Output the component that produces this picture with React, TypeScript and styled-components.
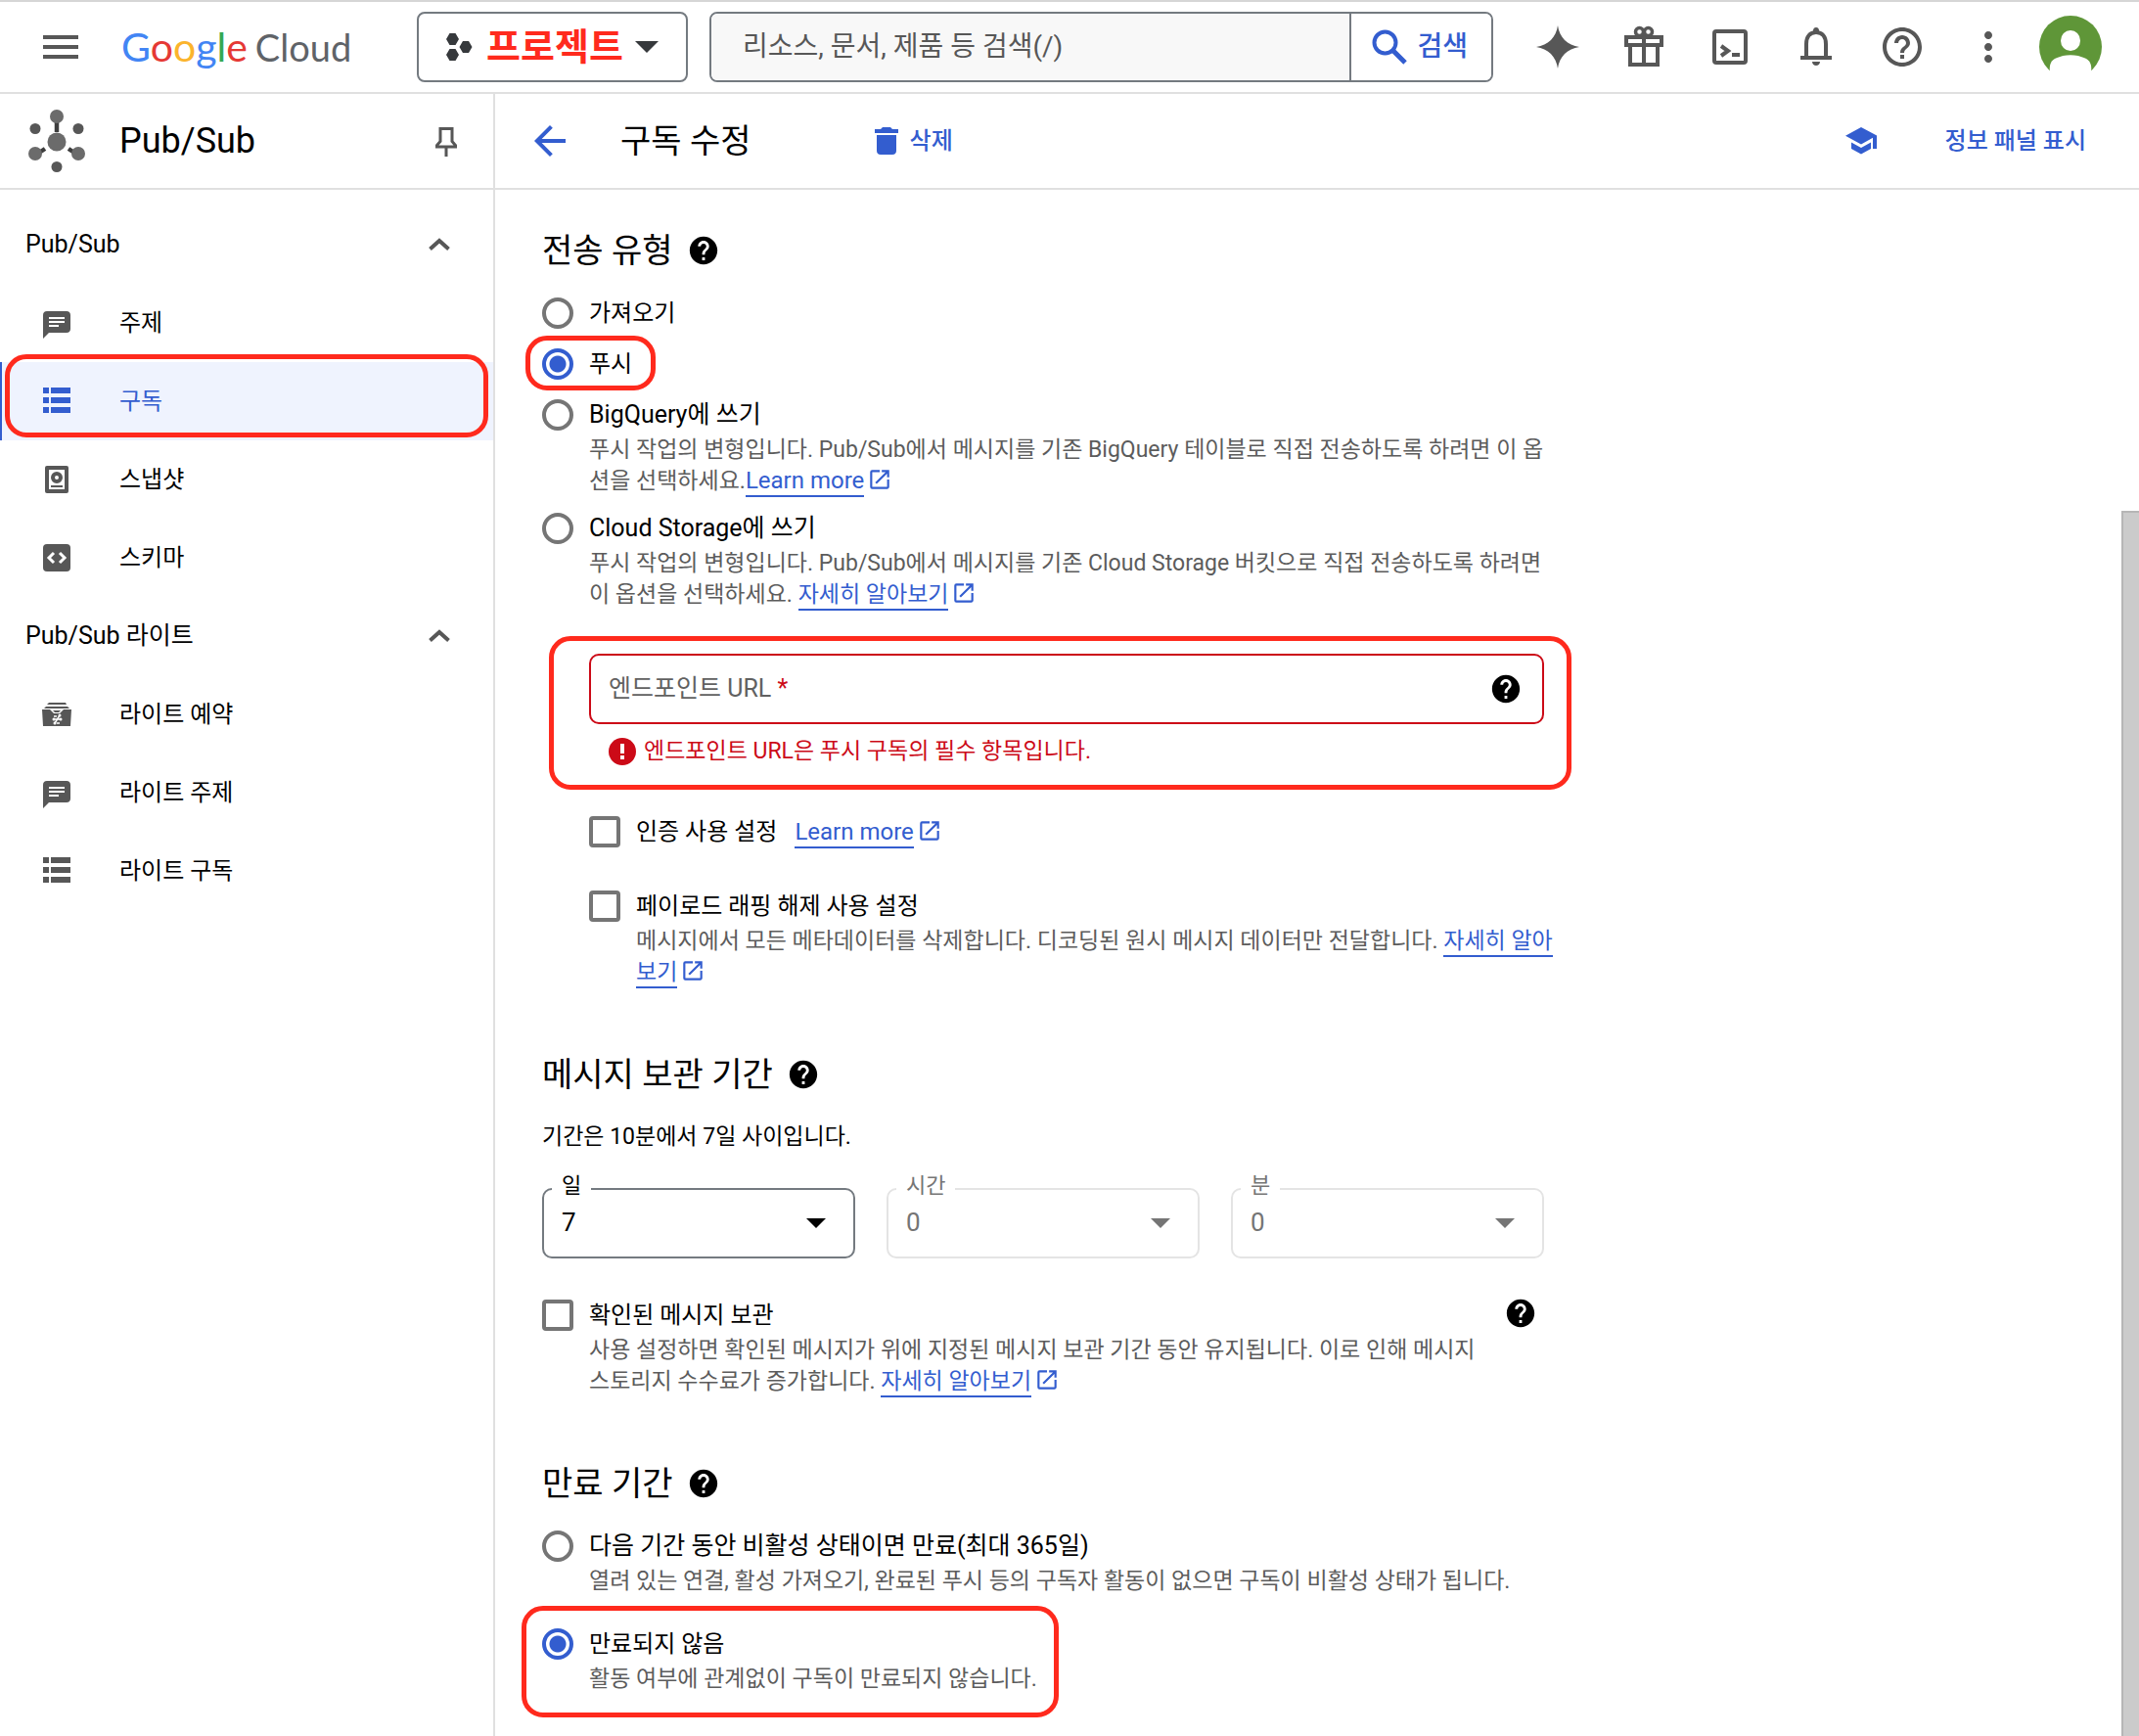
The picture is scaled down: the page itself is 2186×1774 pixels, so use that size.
import React, { useState } from "react";
import styled, { createGlobalStyle, css } from "styled-components";
import {
  MdArrowBack,
  MdHelp,
  MdHelpOutline,
  MdLaunch,
  MdMenu,
  MdMoreVert,
} from "react-icons/md";

const blue = "#335dcf";
const grey = "#575757";
const line = "#e0e0e0";
const danger = "#cc0a17";
const marker = "#ff2a1d";

const GlobalStyle = createGlobalStyle`
  *, *::before, *::after { box-sizing: border-box; }
  body {
    margin: 0;
    background: #fff;
    color: #000;
    font-family: Roboto, "Noto Sans CJK KR", sans-serif;
    font-size: 24px;
    line-height: 32px;
  }
  button, input, select { font: inherit; color: inherit; }
  h1, h2, p, ul { margin: 0; padding: 0; font-weight: 400; }
  ul { list-style: none; }
  svg { display: block; flex: none; }
`;

const Page = styled.div`
  min-height: 100vh;
  display: flex;
  flex-direction: column;
`;

/* ---------- top bar ---------- */

const TopBar = styled.header`
  display: flex;
  align-items: center;
  height: 96px;
  padding: 0 38px;
  border-top: 2px solid #d6d6d6;
  border-bottom: 2px solid ${line};
`;

const IconButton = styled.button<{ $color?: string }>`
  display: flex;
  align-items: center;
  justify-content: center;
  flex: none;
  width: 48px;
  height: 48px;
  padding: 0;
  border: 0;
  background: none;
  color: ${(p) => p.$color ?? grey};
  cursor: pointer;
`;

const Logo = styled.a`
  display: flex;
  align-items: baseline;
  gap: 8px;
  flex: none;
  width: 302px;
  margin-left: 38px;
  font-family: Lato, sans-serif;
  font-size: 38px;
  line-height: 44px;
  color: #5f6368;
  text-decoration: none;
`;

const LogoGoogle = styled.span`
  font-size: 41px;
`;

const LogoLetter = styled.span<{ $color: string }>`
  color: ${(p) => p.$color};
`;

const ProjectButton = styled.button`
  display: flex;
  align-items: center;
  justify-content: center;
  gap: 12px;
  flex: none;
  width: 277px;
  height: 72px;
  padding: 0;
  border: 2px solid #747a80;
  border-radius: 8px;
  background: #fff;
  cursor: pointer;
`;

const ProjectName = styled.span`
  display: flex;
  align-items: center;
  gap: 14px;
  color: ${marker};
  font-size: 38px;
  font-weight: 700;
  line-height: 48px;
`;

const Search = styled.form`
  display: flex;
  flex: 1;
  height: 72px;
  margin: 0 42px 0 22px;
  border: 2px solid #747a80;
  border-radius: 8px;
  overflow: hidden;
`;

const SearchInput = styled.input`
  flex: 1;
  min-width: 0;
  padding: 0 32px;
  border: 0;
  background: #f8f8f8;
  font-size: 28px;
  &::placeholder { color: ${grey}; opacity: 1; }
`;

const SearchButton = styled.button`
  display: flex;
  align-items: center;
  gap: 10px;
  padding: 0 24px 0 21px;
  border: 0;
  border-left: 2px solid #747a80;
  background: #fff;
  color: ${blue};
  font-size: 28px;
  font-weight: 500;
`;

const Actions = styled.div`
  display: flex;
  align-items: center;
  gap: 40px;
  margin-right: 28px;
`;

/* ---------- body ---------- */

const Body = styled.div`
  flex: 1;
  display: grid;
  grid-template-columns: 506px 1fr;
`;

const Sidebar = styled.aside`
  border-right: 2px solid ${line};
`;

const SideHead = styled.div`
  display: flex;
  align-items: center;
  height: 98px;
  padding: 0 24px 0 26px;
  border-bottom: 2px solid ${line};
`;

const ProductName = styled.h2`
  flex: 1;
  margin-left: 32px;
  font-size: 36px;
  line-height: 48px;
`;

const Nav = styled.nav`
  padding-top: 16px;
`;

const GroupButton = styled.button`
  display: flex;
  align-items: center;
  justify-content: space-between;
  width: 100%;
  height: 80px;
  padding: 0 44px 0 26px;
  border: 0;
  background: none;
  font-size: 25px;
`;

const NavItem = styled.li`
  position: relative;
`;

const NavLink = styled.a<{ $active?: boolean }>`
  display: flex;
  align-items: center;
  gap: 50px;
  height: 80px;
  padding-left: 42px;
  border-left: 2px solid ${(p) => (p.$active ? blue : "transparent")};
  background: ${(p) => (p.$active ? "#eff3fe" : "transparent")};
  color: ${(p) => (p.$active ? blue : "#000")};
  text-decoration: none;
  svg { color: ${(p) => (p.$active ? blue : grey)}; }
`;

/* Red outline laid over the element that contains it. */
const Highlight = styled.span<{ $inset: string }>`
  position: absolute;
  inset: ${(p) => p.$inset};
  border: 5px solid ${marker};
  border-radius: 22px;
  pointer-events: none;
`;

const Main = styled.main`
  display: flex;
  flex-direction: column;
  min-width: 0;
`;

const PageHead = styled.div`
  display: flex;
  align-items: center;
  height: 98px;
  padding: 0 54px 0 32px;
  border-bottom: 2px solid ${line};
`;

const PageTitle = styled.h1`
  margin: 0 126px 0 48px;
  font-size: 34px;
  line-height: 48px;
`;

const TextButton = styled.button`
  display: flex;
  align-items: center;
  gap: 12px;
  padding: 0;
  border: 0;
  background: none;
  color: ${blue};
  font-weight: 500;
  cursor: pointer;
`;

const HeadEnd = styled.div`
  display: flex;
  align-items: center;
  gap: 62px;
  margin-left: auto;
`;

const ScrollArea = styled.div`
  flex: 1;
  display: flex;
  justify-content: space-between;
`;

const ScrollTrack = styled.div`
  display: flex;
  width: 18px;
  padding-top: 328px;
`;

const ScrollThumb = styled.div`
  flex: 1;
  border: 2px solid #b6b6b6;
  border-width: 2px 0 0 2px;
  background: #cbcbcb;
`;

const Form = styled.form`
  width: 100%;
  max-width: 1120px;
  padding: 38px 48px 40px;
`;

const Section = styled.section`
  & + & { margin-top: 64px; }
`;

const Heading = styled.h2`
  display: flex;
  align-items: center;
  gap: 14px;
  margin-bottom: 24px;
  font-size: 34px;
  line-height: 48px;
`;

const HelpButton = styled.button`
  display: flex;
  margin: -3px 0;
  padding: 0;
  border: 0;
  background: none;
  color: #000;
  cursor: pointer;
`;

const Options = styled.div<{ $gap: number }>`
  display: flex;
  flex-direction: column;
  align-items: flex-start;
  gap: ${(p) => p.$gap}px;
`;

const Choice = styled.div`
  position: relative;
  display: grid;
  grid-template-columns: 32px auto;
  column-gap: 16px;
  row-gap: 4px;
`;

const ChoiceHead = styled.div`
  display: flex;
  align-items: center;
  gap: 18px;
`;

const Label = styled.label<{ $mixed?: boolean }>`
  font-size: ${(p) => (p.$mixed ? 25 : 24)}px;
  white-space: nowrap;
`;

const Hint = styled.p`
  grid-column: 2;
  color: #5c5c5c;
  font-size: 23px;
  white-space: nowrap;
`;

const mark = css`
  appearance: none;
  width: 32px;
  height: 32px;
  margin: 0;
  border: 4px solid #757575;
  background: #fff;
`;

const Radio = styled.input.attrs({ type: "radio" })`
  ${mark}
  border-radius: 50%;
  &:checked {
    border-color: ${blue};
    background: radial-gradient(circle, ${blue} 8px, transparent 9px);
  }
`;

const Checkbox = styled.input.attrs({ type: "checkbox" })`
  ${mark}
  border-radius: 4px;
  &:checked { border-color: ${blue}; background: ${blue}; }
`;

const Link = styled.a<{ $latin?: boolean }>`
  padding-bottom: 1px;
  border-bottom: 2px solid ${blue};
  color: ${blue};
  font-size: ${(p) => (p.$latin ? 24 : 23)}px;
  line-height: 24px;
  text-decoration: none;
`;

const LaunchMark = styled.span`
  display: inline-block;
  margin-left: 3px;
  color: ${blue};
  vertical-align: -4px;
`;

const Indented = styled.div`
  display: flex;
  flex-direction: column;
  gap: 44px;
  margin-left: 48px;
`;

const Endpoint = styled.div`
  position: relative;
  margin-top: 28px;
  padding: 16px 0 6px;
`;

const Field = styled.div`
  position: relative;
  display: flex;
  align-items: center;
  height: 72px;
  padding-right: 20px;
  border: 2px solid ${danger};
  border-radius: 10px;
`;

const FieldInput = styled.input`
  flex: 1;
  align-self: stretch;
  min-width: 0;
  padding: 0 18px;
  border: 0;
  border-radius: 8px;
  background: none;
`;

const FieldLabel = styled.label`
  position: absolute;
  left: 18px;
  color: #616161;
  font-size: 25px;
  pointer-events: none;
`;

const Required = styled.span`
  color: ${danger};
`;

const ErrorText = styled.p`
  display: flex;
  align-items: center;
  gap: 8px;
  margin-top: 12px;
  padding-left: 20px;
  color: ${danger};
  font-size: 23px;
`;

const Note = styled.p`
  margin-bottom: 36px;
  font-size: 23px;
`;

const Duration = styled.div`
  display: grid;
  grid-template-columns: repeat(3, 1fr);
  gap: 32px;
  margin-bottom: 42px;
`;

const SelectBox = styled.div<{ $off?: boolean }>`
  position: relative;
  color: ${(p) => (p.$off ? "#757575" : "#000")};
`;

const Select = styled.select`
  appearance: none;
  display: block;
  width: 100%;
  height: 72px;
  padding: 0 64px 2px 18px;
  border: 2px solid #747a80;
  border-radius: 10px;
  background: #fff;
  font-size: 26px;
  opacity: 1;
  &:disabled { border-color: #e4e4e4; }
`;

const SelectLabel = styled.label`
  position: absolute;
  top: -18px;
  left: 10px;
  padding: 0 10px;
  background: #fff;
  font-size: 22px;
`;

const SelectArrow = styled.span`
  position: absolute;
  top: 31px;
  right: 30px;
  pointer-events: none;
`;

const Retain = styled.div`
  display: flex;
  align-items: flex-start;
  justify-content: space-between;
  padding-right: 7px;
`;

/* ---------- drawings ---------- */

const Caret = ({ w, h, color = "currentColor" }: { w: number; h: number; color?: string }) => (
  <svg width={w} height={h} viewBox="0 0 20 10" preserveAspectRatio="none" fill={color}>
    <path d="M0 0h20L10 10z" />
  </svg>
);

const ProjectIcon = () => (
  <svg width="27" height="28" viewBox="0 0 27 28" fill="#36393c">
    <path d="M3.500 0h6L13 6l-3.500 6h-6L0 6zM17 8h6l3.500 6L23 20h-6l-3.500-6zM3.500 16h6L13 22l-3.500 6h-6L0 22z" />
  </svg>
);

const SearchIcon = () => (
  <svg width="36" height="36" viewBox="0 0 36 36" fill="none" stroke={blue} strokeWidth="4">
    <circle cx="13.500" cy="13.500" r="11" />
    <path d="M21.500 21.500L34 34" strokeWidth="5" />
  </svg>
);

const SparkIcon = () => (
  <svg width="44" height="44" viewBox="0 0 44 44" fill="currentColor">
    <path d="M22 0C23.500 12 32 20.500 44 22 32 23.500 23.500 32 22 44 20.500 32 12 23.500 0 22 12 20.500 20.500 12 22 0z" />
  </svg>
);

const GiftIcon = () => (
  <svg width="40" height="44" viewBox="0 0 40 44" fill="none" stroke="currentColor" strokeWidth="4">
    <path d="M2 12h36v8H2zM6 20v20h28V20M20 11v29" />
    <circle cx="15.500" cy="6.500" r="4" strokeWidth="3.500" />
    <circle cx="24.500" cy="6.500" r="4" strokeWidth="3.500" />
  </svg>
);

const ShellIcon = () => (
  <svg width="36" height="36" viewBox="0 0 36 36" fill="none" stroke="currentColor" strokeWidth="4">
    <rect x="2" y="2" width="32" height="32" rx="2" />
    <path d="M9 17l7 5-7 5" />
    <path d="M20 26h8" />
  </svg>
);

const BellIcon = () => (
  <svg width="32" height="40" viewBox="0 0 32 40">
    <path d="M6 31V17C6 9 10 5 16 5s10 4 10 12v14" fill="none" stroke="currentColor" strokeWidth="4" />
    <path d="M0 29h32v4H0zM16 0c2 0 3 1.500 3 3v3h-6V3c0-1.500 1-3 3-3zM12 35h8c0 2.500-2 4-4 4s-4-1.500-4-4z" fill="currentColor" />
  </svg>
);

const Avatar = () => (
  <svg width="64" height="64" viewBox="0 0 64 64">
    <defs>
      <clipPath id="avatar"><rect width="64" height="57" /></clipPath>
    </defs>
    <g clipPath="url(#avatar)">
      <circle cx="32" cy="32" r="32" fill="#5f9638" />
      <ellipse cx="32" cy="25.500" rx="10" ry="10.500" fill="#fff" />
      <path d="M11 58c-1-8 1-12 6-14.500 9-4.500 21-4.500 30 0 5 2.500 7 6.500 6 14.500z" fill="#fff" />
    </g>
  </svg>
);

const PubSubIcon = () => (
  <svg width="64" height="66" viewBox="0 0 64 66" fill="#6b6b6b">
    <path d="M32 12v12M20 41l-6 4M44 41l6 4" stroke="#3d3d3d" strokeWidth="4.500" />
    <circle cx="32" cy="34" r="9.500" />
    <circle cx="32" cy="8" r="7" />
    <circle cx="10" cy="46" r="7" />
    <circle cx="54" cy="46" r="7" />
    <g fill="#575757">
      <circle cx="10" cy="20.500" r="5.500" />
      <circle cx="54" cy="20.500" r="5.500" />
      <circle cx="32" cy="59.500" r="5.500" />
    </g>
  </svg>
);

const PinIcon = () => (
  <svg width="22" height="32" viewBox="0 -2 22 32" fill="none" stroke="currentColor" strokeWidth="3">
    <path d="M5 1.500h12v13l3.500 4V20h-19v-1.500l3.500-4zM11 20v10" />
  </svg>
);

const TrashIcon = () => (
  <svg width="24" height="28" viewBox="0 0 24 28" fill="currentColor">
    <path d="M8 0h8l2 2h6v4H0V2h6zM2 8h20v16c0 2.500-1.500 4-4 4H6c-2.500 0-4-1.500-4-4z" />
  </svg>
);

const SchoolIcon = () => (
  <svg width="32" height="28" viewBox="0 0 32 28" fill="currentColor">
    <path d="M16 0l16 8.500V22h-4V10.800L16 17.500 0 8.700zM6 15.500l10 5.500 10-5.500v6.500L16 27.500 6 22z" />
  </svg>
);

const ChevronUp = () => (
  <svg width="22" height="14" viewBox="0 0 22 14" fill="none" stroke={grey} strokeWidth="4">
    <path d="M1.500 11.500L11 3l9.500 8.500" />
  </svg>
);

const ChatIcon = () => (
  <svg width="28" height="32" viewBox="0 -4 28 32" fill="currentColor">
    <path d="M4 0h20c2.500 0 4 1.500 4 4v14c0 2.500-1.500 4-4 4H6l-6 6V4c0-2.500 1.500-4 4-4z" />
    <path d="M6 6h16v2H6zM6 10h16v2H6zM6 14h10v2H6z" fill="#fff" />
  </svg>
);

const ListIcon = () => (
  <svg width="28" height="28" viewBox="0 0 28 28" fill="currentColor">
    <path d="M0 0h6v6H0zM8 0h20v6H8zM0 10h6v6H0zM8 10h20v6H8zM0 20h6v6H0zM8 20h20v6H8z" />
  </svg>
);

const SnapshotIcon = () => (
  <svg width="28" height="28" viewBox="0 0 28 28" fill="currentColor">
    <rect x="2" width="24" height="28" rx="2" />
    <path d="M6 4h16v20H6z" fill="#fff" />
    <circle cx="14" cy="12" r="4" fill="none" stroke="currentColor" strokeWidth="4" />
    <path d="M8 20h12v2H8z" />
  </svg>
);

const SchemaIcon = () => (
  <svg width="28" height="28" viewBox="0 0 28 28">
    <rect width="28" height="28" rx="4" fill="currentColor" />
    <path d="M11 9l-5 5 5 5M17 9l5 5-5 5" fill="none" stroke="#fff" strokeWidth="3" />
  </svg>
);

const ReservationIcon = () => (
  <svg width="28" height="28" viewBox="0 0 28 28" fill="currentColor" overflow="visible">
    <path d="M6 2h17l1 2H4zM3 6h22l2 2H1zM-1 9h8l4 4h6l4-4h8l-1 17H0z" />
    <path d="M10 10h8l-2 2h-4z" />
    <path d="M10 19h9M12 23l5-8M11 16h3M14 23h3" stroke="#fff" strokeWidth="1.500" />
    <g fill="#fff">
      <circle cx="11" cy="19" r="1.500" />
      <circle cx="18" cy="19" r="1.500" />
      <circle cx="17" cy="15" r="1.500" />
      <circle cx="12" cy="23" r="1.500" />
    </g>
  </svg>
);

const ErrorMark = () => (
  <svg width="28" height="28" viewBox="0 0 28 28">
    <circle cx="14" cy="14" r="14" fill={danger} />
    <path d="M12 6h4v10h-4zM12 18h4v4h-4z" fill="#fff" />
  </svg>
);

/* ---------- parts ---------- */

const Help = () => (
  <HelpButton type="button" aria-label="도움말">
    <MdHelp size={34} />
  </HelpButton>
);

const More = ({ children, latin }: { children: React.ReactNode; latin?: boolean }) => (
  <>
    <Link href="#" $latin={latin}>{children}</Link>
    <LaunchMark><MdLaunch size={26} /></LaunchMark>
  </>
);

type Item = { name: string; Icon: React.FC; active?: boolean };

const groups: { title: string; items: Item[] }[] = [
  {
    title: "Pub/Sub",
    items: [
      { name: "주제", Icon: ChatIcon },
      { name: "구독", Icon: ListIcon, active: true },
      { name: "스냅샷", Icon: SnapshotIcon },
      { name: "스키마", Icon: SchemaIcon },
    ],
  },
  {
    title: "Pub/Sub 라이트",
    items: [
      { name: "라이트 예약", Icon: ReservationIcon },
      { name: "라이트 주제", Icon: ChatIcon },
      { name: "라이트 구독", Icon: ListIcon },
    ],
  },
];

const durations = [
  { id: "days", name: "일", value: "7" },
  { id: "hours", name: "시간", value: "0", off: true },
  { id: "minutes", name: "분", value: "0", off: true },
];

export default function App() {
  const [delivery, setDelivery] = useState("push");
  const [expiry, setExpiry] = useState("never");

  const deliveryRadio = (id: string) => (
    <Radio id={id} name="delivery" checked={delivery === id} onChange={() => setDelivery(id)} />
  );
  const expiryRadio = (id: string) => (
    <Radio id={id} name="expiry" checked={expiry === id} onChange={() => setExpiry(id)} />
  );

  return (
    <Page>
      <GlobalStyle />
      <TopBar>
        <IconButton aria-label="메뉴"><MdMenu size={48} /></IconButton>
        <Logo href="#">
          <LogoGoogle>
            <LogoLetter $color="#4285f4">G</LogoLetter>
            <LogoLetter $color="#e53935">o</LogoLetter>
            <LogoLetter $color="#fbb42c">o</LogoLetter>
            <LogoLetter $color="#4285f4">g</LogoLetter>
            <LogoLetter $color="#34a853">l</LogoLetter>
            <LogoLetter $color="#e53935">e</LogoLetter>
          </LogoGoogle>
          <span>Cloud</span>
        </Logo>
        <ProjectButton>
          <ProjectName><ProjectIcon />프로젝트</ProjectName>
          <Caret w={24} h={12} color="#36393c" />
        </ProjectButton>
        <Search onSubmit={(e) => e.preventDefault()}>
          <SearchInput aria-label="검색" placeholder="리소스, 문서, 제품 등 검색(/)" />
          <SearchButton><SearchIcon />검색</SearchButton>
        </Search>
        <Actions>
          <IconButton aria-label="Gemini"><SparkIcon /></IconButton>
          <IconButton aria-label="무료 체험"><GiftIcon /></IconButton>
          <IconButton aria-label="Cloud Shell"><ShellIcon /></IconButton>
          <IconButton aria-label="알림"><BellIcon /></IconButton>
          <IconButton aria-label="도움말"><MdHelpOutline size={48} /></IconButton>
          <IconButton aria-label="더보기"><MdMoreVert size={48} /></IconButton>
        </Actions>
        <Avatar />
      </TopBar>

      <Body>
        <Sidebar>
          <SideHead>
            <PubSubIcon />
            <ProductName>Pub/Sub</ProductName>
            <IconButton aria-label="고정"><PinIcon /></IconButton>
          </SideHead>
          <Nav>
            {groups.map((group) => (
              <React.Fragment key={group.title}>
                <GroupButton>{group.title}<ChevronUp /></GroupButton>
                <ul>
                  {group.items.map(({ name, Icon, active }) => (
                    <NavItem key={name}>
                      <NavLink href="#" $active={active}><Icon />{name}</NavLink>
                      {active && <Highlight $inset="-8px 5px 3px 5px" />}
                    </NavItem>
                  ))}
                </ul>
              </React.Fragment>
            ))}
          </Nav>
        </Sidebar>

        <Main>
          <PageHead>
            <IconButton aria-label="뒤로" $color={blue}><MdArrowBack size={48} /></IconButton>
            <PageTitle>구독 수정</PageTitle>
            <TextButton><TrashIcon />삭제</TextButton>
            <HeadEnd>
              <IconButton aria-label="학습" $color={blue}><SchoolIcon /></IconButton>
              <TextButton>정보 패널 표시</TextButton>
            </HeadEnd>
          </PageHead>

          <ScrollArea>
            <Form>
              <Section>
                <Heading>전송 유형<Help /></Heading>
                <Options $gap={20}>
                  <Choice>
                    {deliveryRadio("pull")}
                    <Label htmlFor="pull">가져오기</Label>
                  </Choice>
                  <Choice>
                    {deliveryRadio("push")}
                    <Label htmlFor="push">푸시</Label>
                    <Highlight $inset="-13px -24px -11px -17px" />
                  </Choice>
                  <Options $gap={16}>
                    <Choice>
                      {deliveryRadio("bigquery")}
                      <Label htmlFor="bigquery" $mixed>BigQuery에 쓰기</Label>
                      <Hint>
                        푸시 작업의 변형입니다. Pub/Sub에서 메시지를 기존 BigQuery 테이블로 직접 전송하도록 하려면 이 옵<br />
                        션을 선택하세요.<More latin>Learn more</More>
                      </Hint>
                    </Choice>
                    <Choice>
                      {deliveryRadio("storage")}
                      <Label htmlFor="storage" $mixed>Cloud Storage에 쓰기</Label>
                      <Hint>
                        푸시 작업의 변형입니다. Pub/Sub에서 메시지를 기존 Cloud Storage 버킷으로 직접 전송하도록 하려면<br />
                        이 옵션을 선택하세요. <More>자세히 알아보기</More>
                      </Hint>
                    </Choice>
                  </Options>
                </Options>

                <Indented>
                  <Endpoint>
                    <Field>
                      <FieldInput id="endpoint" aria-invalid="true" />
                      <FieldLabel htmlFor="endpoint">엔드포인트 URL <Required>*</Required></FieldLabel>
                      <Help />
                    </Field>
                    <ErrorText>
                      <ErrorMark />엔드포인트 URL은 푸시 구독의 필수 항목입니다.
                    </ErrorText>
                    <Highlight $inset="-2px -28px -17px -41px" />
                  </Endpoint>
                  <Choice>
                    <Checkbox id="auth" />
                    <ChoiceHead>
                      <Label htmlFor="auth">인증 사용 설정</Label>
                      <span><More latin>Learn more</More></span>
                    </ChoiceHead>
                  </Choice>
                  <Choice>
                    <Checkbox id="unwrap" />
                    <Label htmlFor="unwrap">페이로드 래핑 해제 사용 설정</Label>
                    <Hint>
                      메시지에서 모든 메타데이터를 삭제합니다. 디코딩된 원시 메시지 데이터만 전달합니다.{" "}
                      <More>자세히 알아<br />보기</More>
                    </Hint>
                  </Choice>
                </Indented>
              </Section>

              <Section>
                <Heading>메시지 보관 기간<Help /></Heading>
                <Note>기간은 10분에서 7일 사이입니다.</Note>
                <Duration>
                  {durations.map((d) => (
                    <SelectBox key={d.id} $off={d.off}>
                      <Select id={d.id} disabled={d.off} defaultValue={d.value}>
                        <option>{d.value}</option>
                      </Select>
                      <SelectLabel htmlFor={d.id}>{d.name}</SelectLabel>
                      <SelectArrow><Caret w={20} h={10} /></SelectArrow>
                    </SelectBox>
                  ))}
                </Duration>
                <Retain>
                  <Choice>
                    <Checkbox id="retain" />
                    <Label htmlFor="retain">확인된 메시지 보관</Label>
                    <Hint>
                      사용 설정하면 확인된 메시지가 위에 지정된 메시지 보관 기간 동안 유지됩니다. 이로 인해 메시지<br />
                      스토리지 수수료가 증가합니다. <More>자세히 알아보기</More>
                    </Hint>
                  </Choice>
                  <Help />
                </Retain>
              </Section>

              <Section>
                <Heading>만료 기간<Help /></Heading>
                <Options $gap={32}>
                  <Choice>
                    {expiryRadio("inactive")}
                    <Label htmlFor="inactive" $mixed>다음 기간 동안 비활성 상태이면 만료(최대 365일)</Label>
                    <Hint>열려 있는 연결, 활성 가져오기, 완료된 푸시 등의 구독자 활동이 없으면 구독이 비활성 상태가 됩니다.</Hint>
                  </Choice>
                  <Choice>
                    {expiryRadio("never")}
                    <Label htmlFor="never">만료되지 않음</Label>
                    <Hint>활동 여부에 관계없이 구독이 만료되지 않습니다.</Hint>
                    <Highlight $inset="-23px -22px -23px -21px" />
                  </Choice>
                </Options>
              </Section>
            </Form>
            <ScrollTrack><ScrollThumb /></ScrollTrack>
          </ScrollArea>
        </Main>
      </Body>
    </Page>
  );
}
